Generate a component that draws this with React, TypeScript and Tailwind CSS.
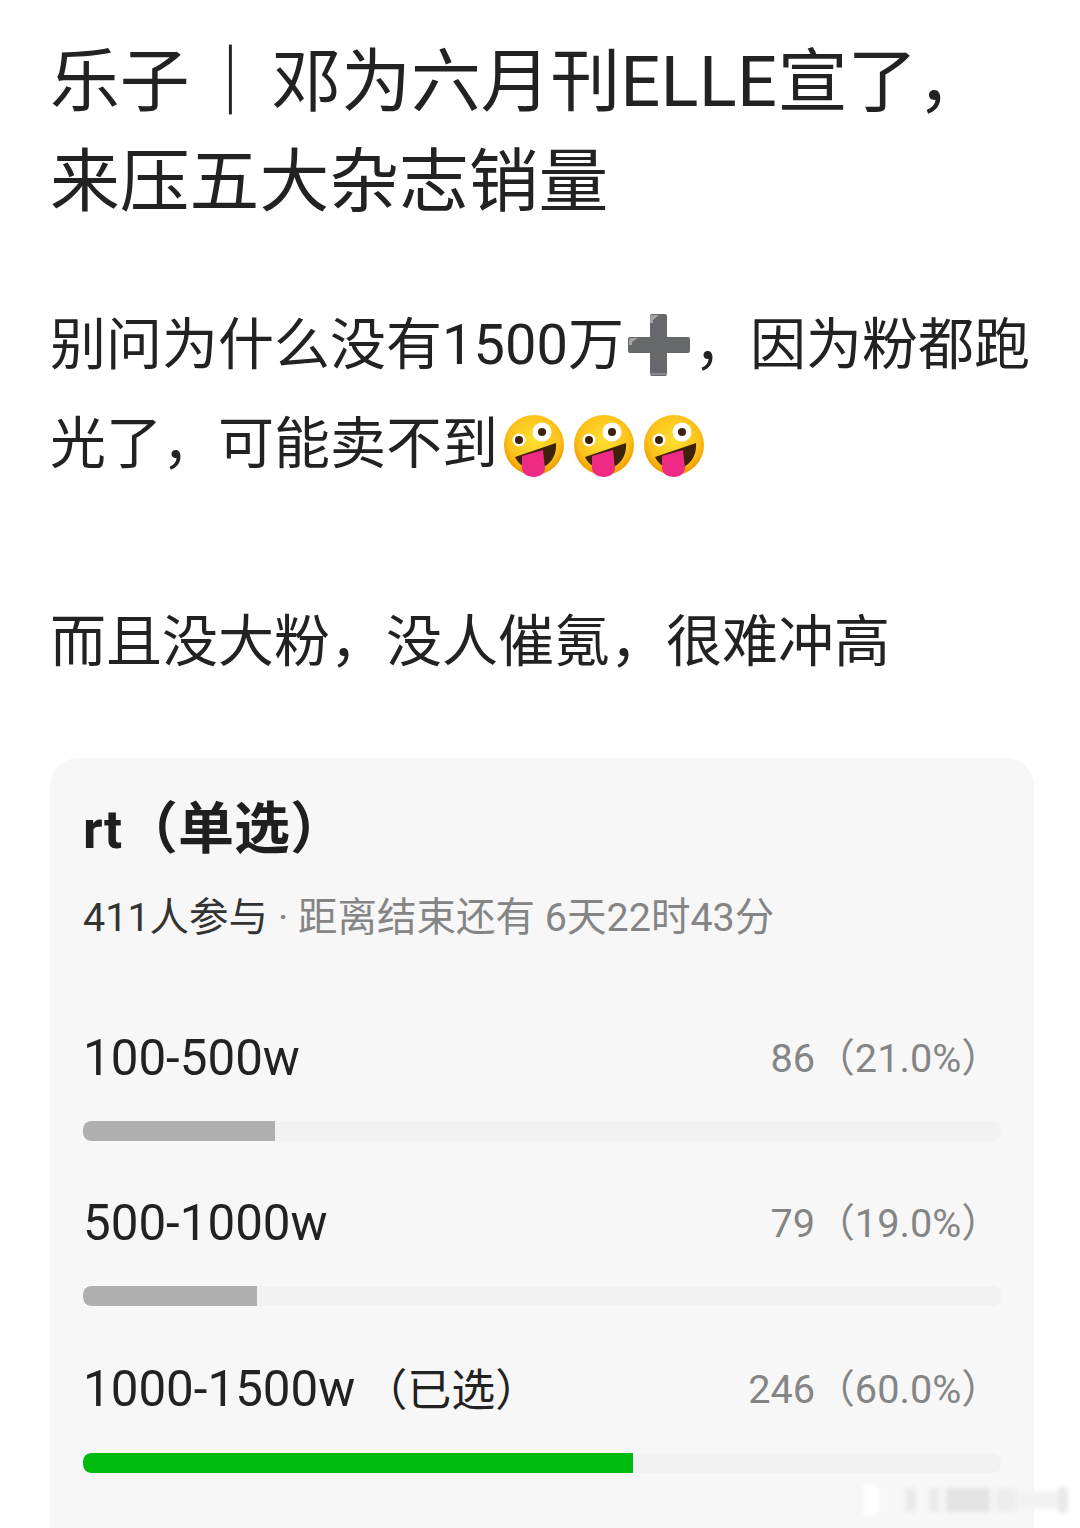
const FONT = "font-['Roboto','Noto_Sans_CJK_SC',sans-serif]";

function Plus() {
  return (
    <svg width="62" height="62" viewBox="0 0 62 62" className="inline-block shrink-0">
      <path d="M24 0h13a2 2 0 0 1 2 2v21h21a2 2 0 0 1 2 2v12a2 2 0 0 1-2 2H39v21a2 2 0 0 1-2 2H24a2 2 0 0 1-2-2V39H2a2 2 0 0 1-2-2V25a2 2 0 0 1 2-2h20V2a2 2 0 0 1 2-2z" fill="#66686c" />
      <path d="M24 1h7l-6 5v3h-3V4c0-2 1-3 2-3z" fill="#a3a5a8" />
      <path d="M3 24h7l-6 4v3H1v-5c0-1 1-2 2-2z" fill="#a3a5a8" />
      <rect x="22" y="59" width="17" height="2" fill="#86888c" />
    </svg>
  );
}

function Zany() {
  return (
    <svg width="64" height="64" viewBox="0 0 64 64" className="inline-block shrink-0">
      <defs>
        <radialGradient id="zf" cx="50%" cy="42%" r="56%">
          <stop offset="0%" stopColor="#fde030" />
          <stop offset="75%" stopColor="#fcc21b" />
          <stop offset="100%" stopColor="#f19d00" />
        </radialGradient>
      </defs>
      <circle cx="32" cy="30" r="30" fill="url(#zf)" />
      <path d="M13 42l41-14c1 14-7 24-19 26-9 1-18-3-22-12z" fill="#3e2208" />
      <path d="M20 41l21-6 2 18c0 5-5 9-11 9-7 0-12-4-12-9z" fill="#ee2a84" />
      <circle cx="17" cy="25" r="6.5" fill="#fff" />
      <circle cx="17" cy="25" r="4" fill="#3e2208" />
      <circle cx="40" cy="17" r="9.5" fill="#fff" />
      <circle cx="40" cy="17" r="4" fill="#3e2208" />
    </svg>
  );
}

function Option({ label, suffix, stat, pct, selected }: { label: string; suffix?: string; stat: string; pct: number; selected?: boolean }) {
  return (
    <div className={selected ? "flex flex-col h-[165px] mt-[2px]" : "flex flex-col h-[165px]"}>
      <div className={selected ? "flex items-center justify-between h-[68px]" : "flex items-center justify-between h-[70px]"}>
        <div className="flex items-baseline text-[49.3px] text-[#222222]">
          <span>{label}</span>
          {suffix && <span className="text-[44px] ml-[8px]">{suffix}</span>}
        </div>
        <div className="text-[39.7px] text-[#858585]">{stat}</div>
      </div>
      <div className={selected ? "mt-[29px] h-[20px] rounded-[8px] bg-[#f2f2f2] overflow-hidden" : "mt-[27px] h-[20px] rounded-[8px] bg-[#f2f2f2] overflow-hidden"}>
        <div
          className={selected ? "h-full rounded-l-[8px] bg-[#00bb0f]" : "h-full rounded-l-[8px] bg-[#b0b0b0]"}
          style={{ width: `${pct}%` }}
        />
      </div>
    </div>
  );
}

export default function App() {
  return (
    <div className={`${FONT} relative h-[1528px] w-[1080px] overflow-hidden bg-white text-[#222222]`}>
      <div className="pl-[50px] pt-[32px]">
        <h1 className="text-[69.8px] leading-[100px] font-normal whitespace-nowrap">
          <div className="flex">
            <span>乐子</span>
            <span className="ml-[6px]">｜</span>
            <span className="ml-[6px]">邓为六月刊<span className="tracking-[0.7px]">ELLE</span>宣了，</span>
          </div>
          <div>来压五大杂志销量</div>
        </h1>
      </div>

      <div className="pl-[50px] pt-[64px] text-[56px] leading-[99px] whitespace-nowrap">
        <div className="flex items-center h-[99px]">
          别问为什么没有1500万
          <span className="ml-[4px] mt-[-2px] flex"><Plus /></span>
          <span className="ml-[4px]">，因为粉都跑</span>
        </div>
        <div className="flex items-center h-[99px]">
          光了，可能卖不到
          <span className="ml-[4px] mt-[4px] flex gap-[6px]"><Zany /><Zany /><Zany /></span>
        </div>
        <div className="h-[99px]" />
        <div className="h-[99px]">而且没大粉，没人催氪，很难冲高</div>
      </div>

      <div className="mx-[50px] mt-[66px] w-[984px] h-[800px] rounded-t-[28px] bg-[#f7f7f7] px-[33px] pt-[36px]">
        <div className="text-[56px] leading-[70px] font-bold text-[#1f1f1f]"><span className="text-[53.5px]">rt</span>（单选）</div>
        <div className="mt-[28px] text-[39.5px] leading-[50px] text-[#858585] whitespace-nowrap">
          <span className="text-[#333333]">411人参与</span> · 距离结束还有 6天22时43分
        </div>
        <div className="mt-[81px]">
          <Option label="100-500w" stat="86（21.0%）" pct={20.9} />
          <Option label="500-1000w" stat="79（19.0%）" pct={19} />
          <Option label="1000-1500w" suffix="（已选）" stat="246（60.0%）" pct={59.9} selected />
        </div>
      </div>

      <div className="absolute left-[863px] top-[1484px] h-[32px] w-[208px] flex items-center blur-[2px]">
        <div className="h-[32px] w-[15px] rounded-[2px] bg-white" />
        <div className="ml-[28px] h-[24px] w-[10px] bg-[#e9e9e9]" />
        <div className="ml-[14px] h-[24px] w-[8px] bg-[#e9e9e9]" />
        <div className="ml-[8px] h-[24px] w-[44px] bg-[#e4e4e4]" />
        <div className="ml-[6px] h-[24px] w-[20px] bg-[#ededed]" />
        <div className="ml-[2px] h-[16px] w-[40px] bg-[#f2f2f2]" />
        <div className="h-[26px] w-[10px] bg-[#e9e9e9]" />
      </div>
    </div>
  );
}
